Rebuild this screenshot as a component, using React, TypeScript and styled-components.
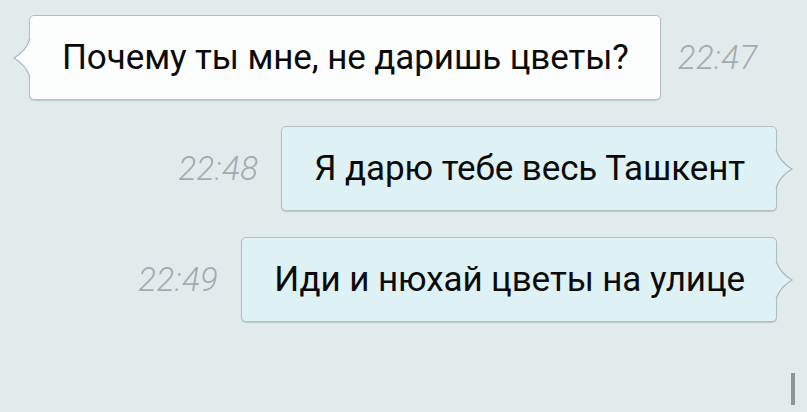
import React from "react";
import styled, { createGlobalStyle } from "styled-components";

const GlobalStyle = createGlobalStyle`
  html, body {
    margin: 0;
    padding: 0;
    background: #e2ebeb;
    font-family: Roboto, "Noto Sans", sans-serif;
  }
`;

const Screen = styled.div`
  width: 807px;
  height: 412px;
  background: #e2ebeb;
  position: relative;
  overflow: hidden;
  display: flex;
  flex-direction: column;
  gap: 26px;
  padding-top: 15px;
  box-sizing: border-box;
`;

const Row = styled.div<{ $out?: boolean }>`
  display: flex;
  align-items: center;
  justify-content: ${(p) => (p.$out ? "flex-end" : "flex-start")};
  gap: ${(p) => (p.$out ? "23px" : "17px")};
  padding: ${(p) => (p.$out ? "0 30px 0 0" : "0 0 0 29px")};
`;

const Bubble = styled.div<{ $out?: boolean }>`
  position: relative;
  height: 85px;
  box-sizing: border-box;
  display: flex;
  align-items: center;
  padding: 0 31px 0 32px;
  border: 1px solid #b2bfc1;
  border-radius: 5px;
  background: ${(p) => (p.$out ? "#def2f6" : "#fcfefd")};
  box-shadow: 0 1px 1px rgba(120, 140, 145, 0.35);
  color: #0a0a0a;
  font-size: 35px;
  letter-spacing: -0.1px;
  white-space: nowrap;
`;

const Tail = styled.svg<{ $out?: boolean }>`
  position: absolute;
  top: 50%;
  margin-top: -19px;
  width: 19px;
  height: 38px;
  ${(p) => (p.$out ? "right: -18px;" : "left: -18px;")}
  ${(p) => (p.$out ? "transform: scaleX(-1);" : "")}
`;

const Time = styled.span`
  font-family: Roboto, "Noto Sans", sans-serif;
  font-weight: 300;
  font-style: italic;
  font-size: 33px;
  color: #a2abb0;
  letter-spacing: 0.4px;
`;

const ScrollThumb = styled.div`
  position: absolute;
  right: 12px;
  top: 373px;
  width: 4px;
  height: 32px;
  background: #8f9596;
`;

const BubbleTail = ({ out }: { out?: boolean }) => {
  const fill = out ? "#def2f6" : "#fcfefd";
  return (
    <Tail $out={out} viewBox="0 0 19 38">
      <path d="M19,0 L18,0 Q14,12 2,19 Q14,26 18,38 L19,38 Z" fill={fill} />
      <path
        d="M18,0 Q14,12 2,19 Q14,26 18,38"
        fill="none"
        stroke="#a9b6b8"
        strokeWidth="1.2"
      />
    </Tail>
  );
};

const messages = [
  { text: "Почему ты мне, не даришь цветы?", time: "22:47", out: false },
  { text: "Я дарю тебе весь Ташкент", time: "22:48", out: true },
  { text: "Иди и нюхай цветы на улице", time: "22:49", out: true },
];

export default function App() {
  return (
    <>
      <GlobalStyle />
      <Screen>
        {messages.map((m) =>
          m.out ? (
            <Row key={m.time} $out>
              <Time>{m.time}</Time>
              <Bubble $out>
                {m.text}
                <BubbleTail out />
              </Bubble>
            </Row>
          ) : (
            <Row key={m.time}>
              <Bubble>
                {m.text}
                <BubbleTail />
              </Bubble>
              <Time>{m.time}</Time>
            </Row>
          )
        )}
        <ScrollThumb />
      </Screen>
    </>
  );
}
